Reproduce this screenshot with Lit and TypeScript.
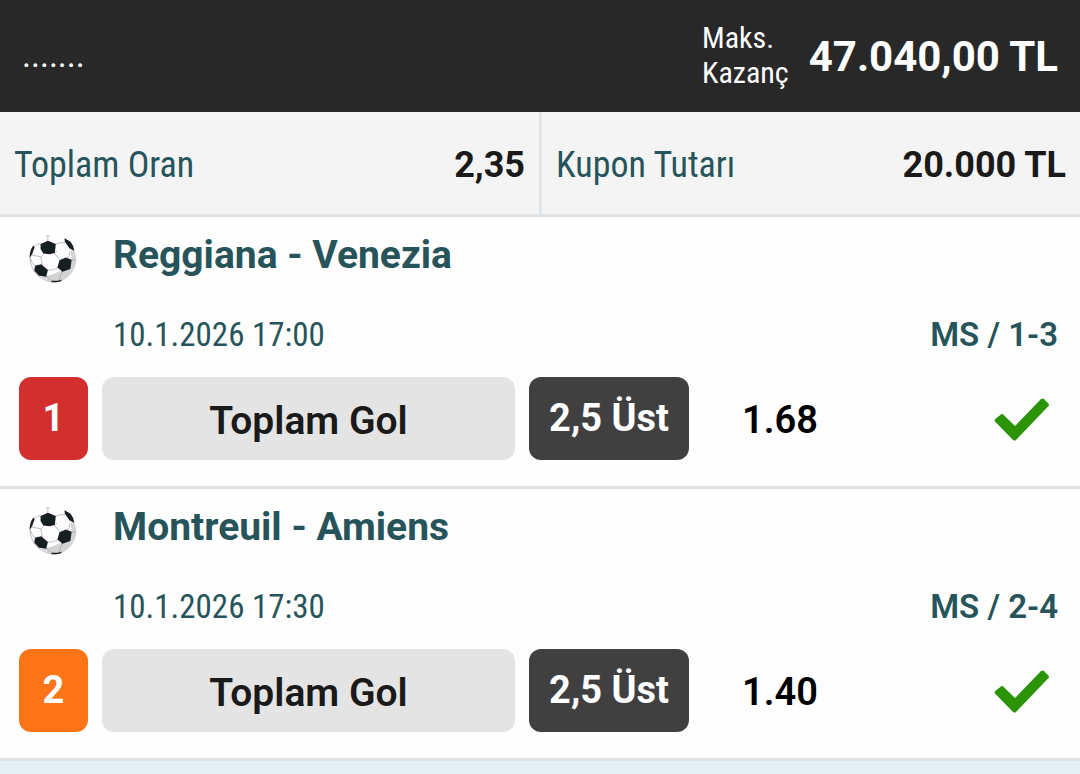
import { LitElement, html, css, svg } from "lit";
import { customElement, property } from "lit/decorators.js";
import { classMap } from "lit/directives/class-map.js";

interface Pick {
  no: number;
  tone: "red" | "orange";
  teams: string;
  kickoff: string;
  score: string;
  market: string;
  selection: string;
  odds: string;
}

const picks: Pick[] = [
  {
    no: 1,
    tone: "red",
    teams: "Reggiana - Venezia",
    kickoff: "10.1.2026 17:00",
    score: "MS / 1-3",
    market: "Toplam Gol",
    selection: "2,5 Üst",
    odds: "1.68",
  },
  {
    no: 2,
    tone: "orange",
    teams: "Montreuil - Amiens",
    kickoff: "10.1.2026 17:30",
    score: "MS / 2-4",
    market: "Toplam Gol",
    selection: "2,5 Üst",
    odds: "1.40",
  },
];

const ballArt = svg`
  <path d="M50 64 Q62 50 77 54 L97 46 L119 54 Q134 48 150 52 L172 74 Q186 96 178 124 Q166 158 132 169 Q92 172 66 150 Q46 132 43 100 Z" fill="#fdfdfd"/>
  <path d="M165 76 L175 74 Q190 98 178 126 Q164 160 126 171 Q98 168 78 154 L92 151 Q112 150 128 139 L141 136 L163 131 L169 104 Z" fill="#d2d3d4"/>
  <g fill="none" stroke="#85898b" stroke-width="1.6">
    <path d="M97 30 V46 M92 30 H102 M77 55 Q66 52 55 63 M120 56 Q134 48 149 52 M85 84 L76 96 L80 118 M116 82 L134 104 M76 94 Q56 90 46 88 M95 134 Q112 137 128 126 M92 151 L105 164 M141 136 L131 164 M163 78 Q164 92 155 98 M116 82 Q121 79 125 77 M168 104 H181 M58 122 Q48 114 44 96"/>
    <path d="M43 100 Q46 132 66 150 Q90 170 120 171"/>
  </g>
  <g fill="#171f23">
    <path d="M75 55 L97 45 L121 55 L118 82 L102 86 L83 84 L75 70 Z"/>
    <path d="M132 104 L151 96 L169 103 L165 131 L141 139 L126 126 Z"/>
    <path d="M58 121 L77 116 L97 134 L92 154 L70 151 L56 136 Z"/>
    <path d="M147 38 L165 48 Q175 60 177 76 L162 68 L148 48 Z"/>
    <path d="M53 60 L57 65 L50 84 L42 98 Q41 76 53 60 Z"/>
    <path d="M107 166 Q122 168 138 163 L138 167 Q122 174 107 169 Z"/>
  </g>
`;

@customElement("match-pick")
class MatchPick extends LitElement {
  @property({ attribute: false }) pick!: Pick;

  static styles = css`
    :host {
      display: block;
      padding: 0 22px 26px 19px;
      border-bottom: 3px solid #dce2e6;
      background: #fefefe;
      color: #27545b;
    }
    .title,
    .info {
      display: flex;
      align-items: center;
    }
    .title {
      gap: 36px;
      padding-left: 10px;
      line-height: 76px;
    }
    .ball {
      flex: none;
      width: 48px;
      height: 48px;
      margin-top: 7px;
    }
    .teams {
      margin: 0;
      font-size: 39px;
      font-weight: 700;
    }
    .info {
      justify-content: space-between;
      padding-left: 94px;
      line-height: 84px;
      font-size: 33px;
    }
    .kickoff {
      font-family: "Roboto Condensed", Roboto, sans-serif;
    }
    .score {
      font-weight: 600;
    }
    .bet {
      display: grid;
      grid-template-columns: 69px 413fr 160px 355fr;
      grid-template-rows: 83px;
      gap: 14px;
      font-size: 38px;
      font-weight: 600;
      line-height: 83px;
      text-align: center;
    }
    .chip {
      border-radius: 12px;
      color: #ffffff;
      font-weight: 700;
    }
    .red {
      background: #d32f2f;
    }
    .orange {
      background: #fb7518;
    }
    .market {
      border-radius: 12px;
      background: #e4e4e4;
      color: #1a1a1a;
      font-size: 39px;
      line-height: 89px;
    }
    .selection {
      background: #404040;
    }
    .result {
      display: flex;
      align-items: flex-start;
      justify-content: space-between;
      padding: 0 8px 0 39px;
      color: #000000;
      line-height: 87px;
    }
    .check {
      width: 56px;
      height: 44px;
      margin-top: 20px;
    }
  `;

  render() {
    const p = this.pick;
    return html`
      <div class="title">
        <svg class="ball" viewBox="40 28 145 145" aria-hidden="true">${ballArt}</svg>
        <h2 class="teams">${p.teams}</h2>
      </div>
      <div class="info">
        <time class="kickoff">${p.kickoff}</time>
        <span class="score">${p.score}</span>
      </div>
      <div class="bet">
        <span class=${classMap({ chip: true, [p.tone]: true })}>${p.no}</span>
        <span class="market">${p.market}</span>
        <span class="chip selection">${p.selection}</span>
        <div class="result">
          <span>${p.odds}</span>
          <svg class="check" viewBox="0 0 56 44" role="img" aria-label="Kazandı">
            <path
              d="M7.2 17.2 L1 22.2 Q0 23.2 1 24.4 L19 43 Q20.500 44 22 43 L54.500 9 Q55.500 8 54.500 6.800 L50 2 Q48.500 1 47 2 L21 29 L9.200 17.400 Q8.200 16.500 7.200 17.200 Z"
              fill="#2a9308"
            />
          </svg>
        </div>
      </div>
    `;
  }
}

@customElement("app-root")
class AppRoot extends LitElement {
  static styles = css`
    :host {
      display: block;
      min-height: 100vh;
      background: #e4eff1;
      font-family: Roboto, sans-serif;
    }
    .header {
      display: flex;
      align-items: center;
      padding: 20px 22px 22px;
      background: #282828;
      color: #ffffff;
    }
    .name,
    .caption,
    .label {
      font-family: "Roboto Condensed", Roboto, sans-serif;
    }
    .name {
      flex: 1;
      font-size: 34px;
    }
    .caption {
      width: min-content;
      margin-right: 20px;
      font-size: 30px;
      line-height: 35px;
    }
    .payout {
      padding-top: 2px;
      font-size: 42px;
      font-weight: 700;
    }
    .totals {
      display: grid;
      grid-template-columns: 542fr 538fr;
      margin: 0;
      border-bottom: 3px solid #dce2e6;
      background: #f4f4f4;
      font-size: 36px;
      line-height: 98px;
    }
    .total {
      display: flex;
      justify-content: space-between;
      padding: 4px 14px 0;
    }
    .total:first-child {
      border-right: 3px solid #e2e4e6;
    }
    .label {
      color: #27545b;
    }
    .value {
      margin: 0;
      color: #1a1a1a;
      font-weight: 700;
    }
  `;

  render() {
    return html`
      <header class="header">
        <span class="name">.......</span>
        <span class="caption">Maks. Kazanç</span>
        <strong class="payout">47.040,00 TL</strong>
      </header>
      <dl class="totals">
        <div class="total">
          <dt class="label">Toplam Oran</dt>
          <dd class="value">2,35</dd>
        </div>
        <div class="total">
          <dt class="label">Kupon Tutarı</dt>
          <dd class="value">20.000 TL</dd>
        </div>
      </dl>
      <main>${picks.map((p) => html`<match-pick .pick=${p}></match-pick>`)}</main>
    `;
  }
}
